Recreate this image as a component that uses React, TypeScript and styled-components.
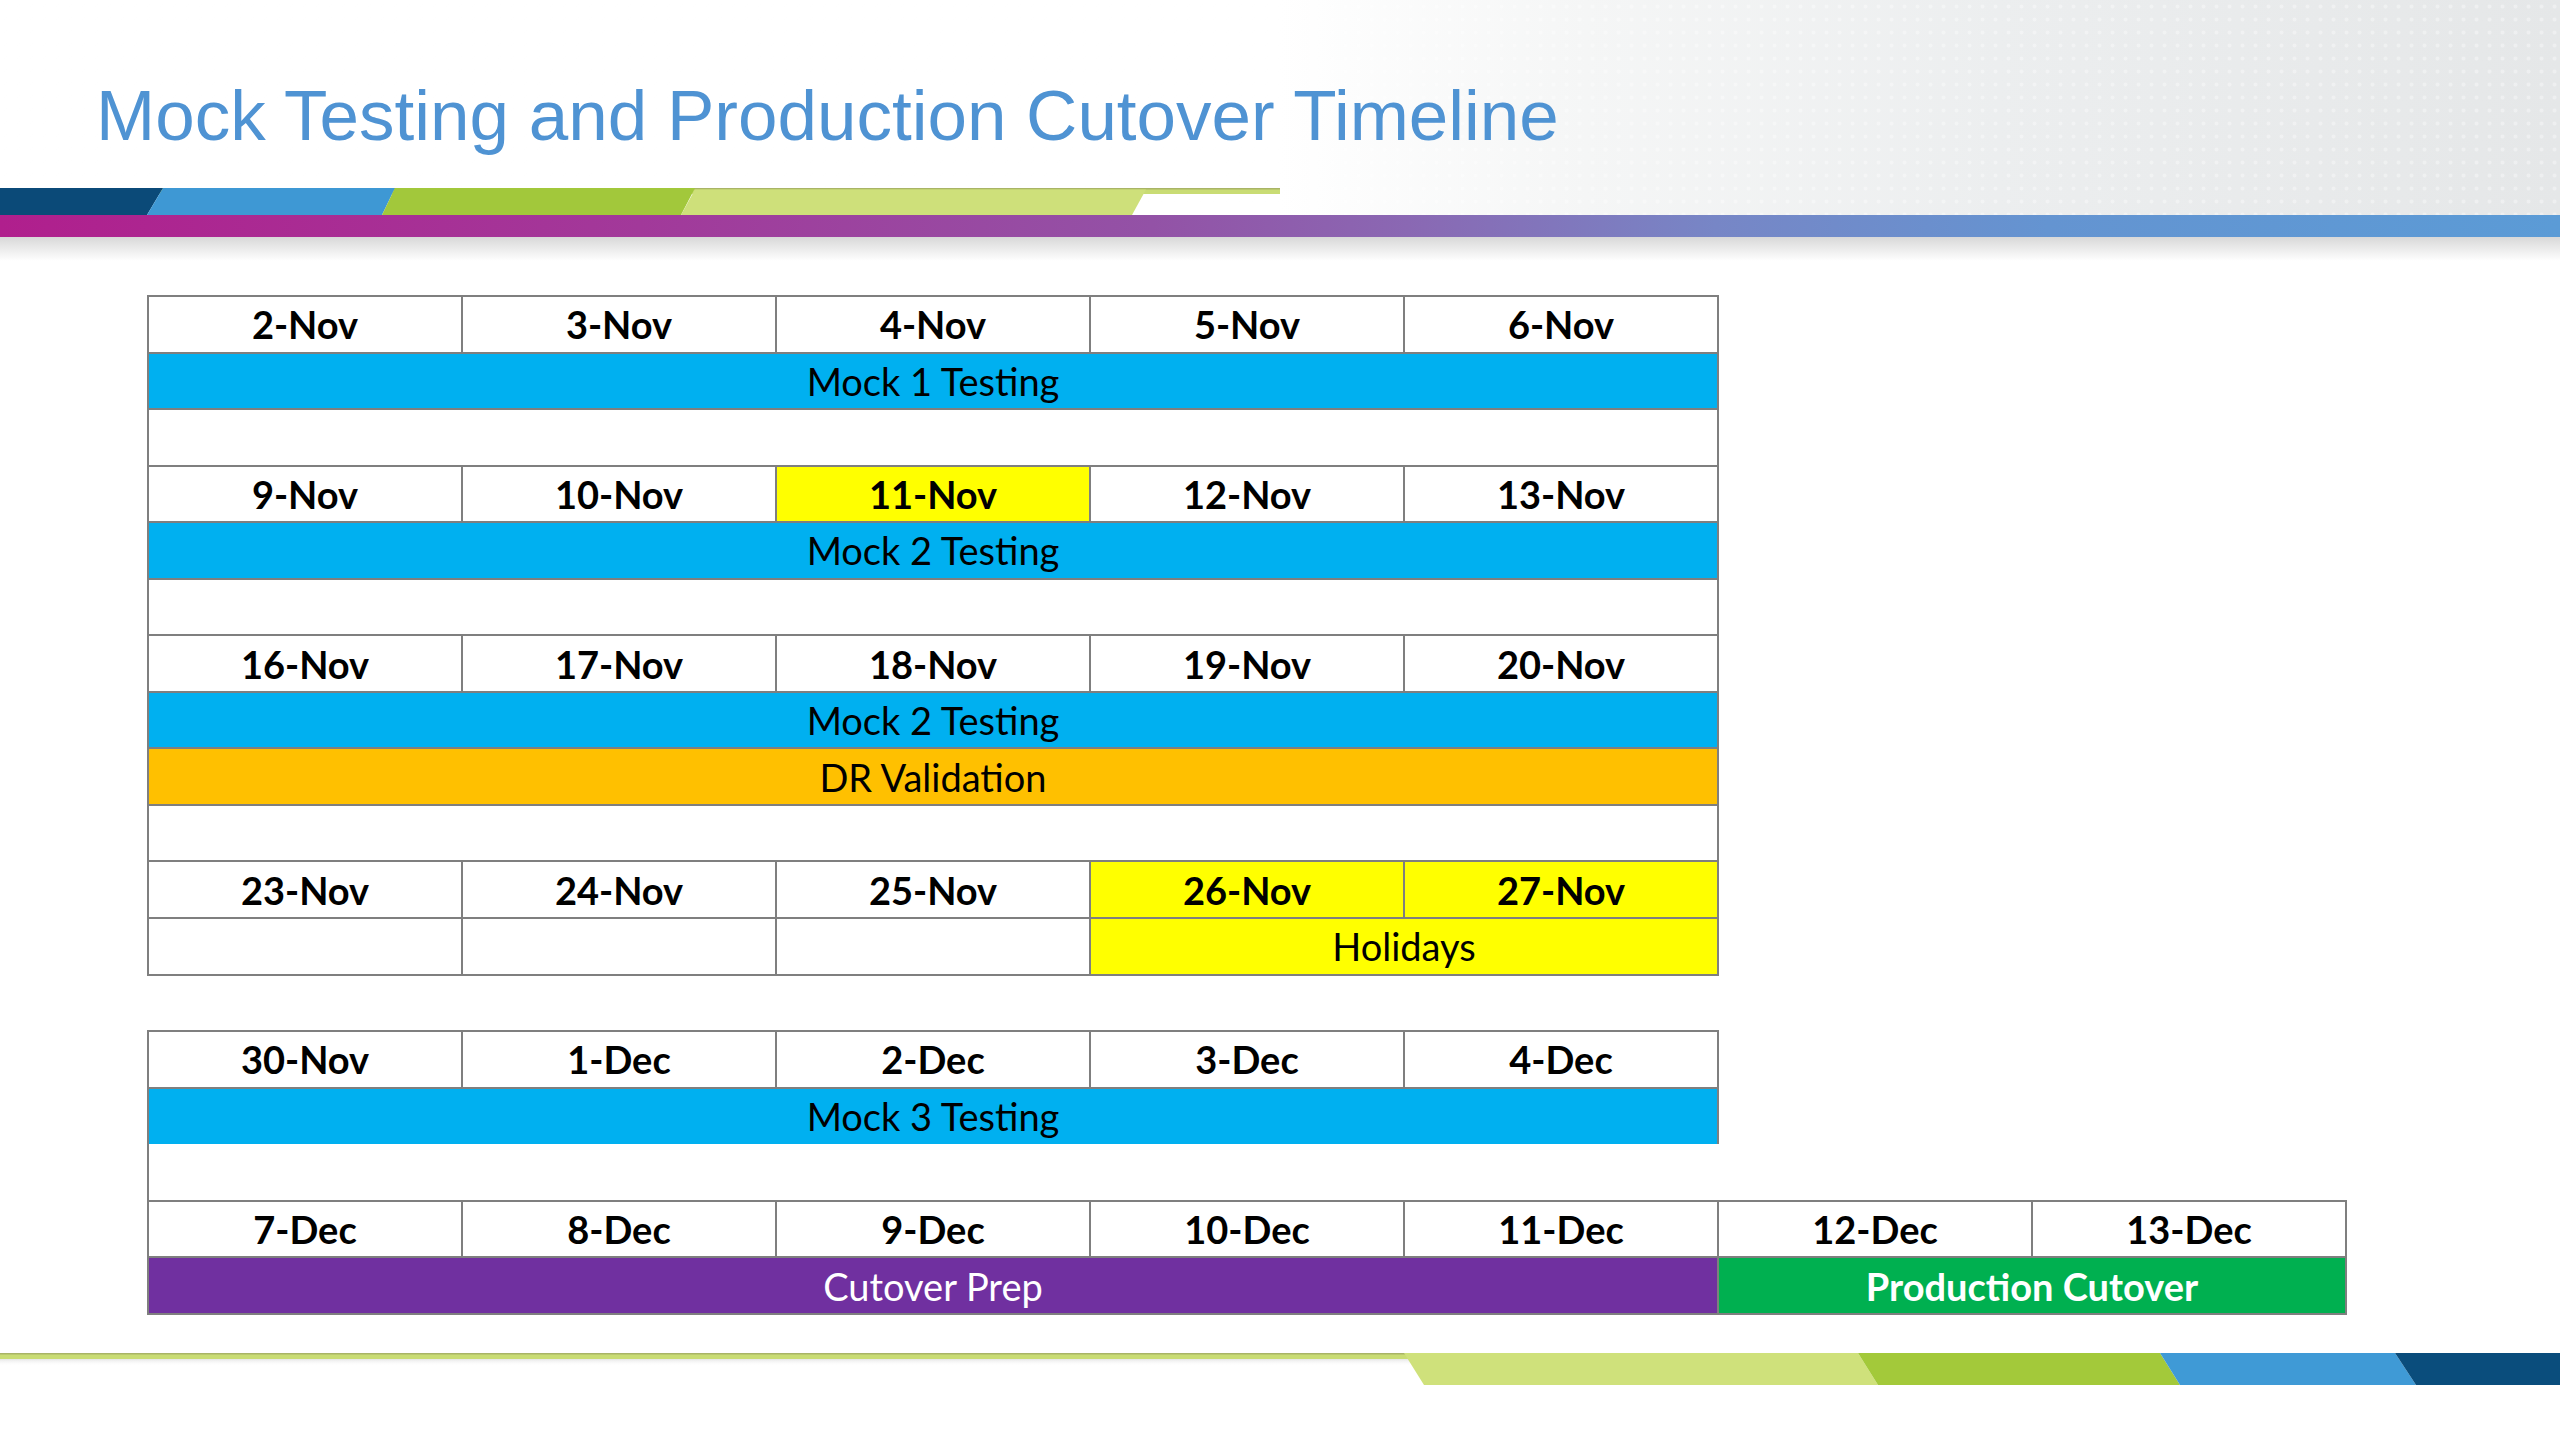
import React from 'react';
import styled, { createGlobalStyle, css } from 'styled-components';

const GlobalStyle = createGlobalStyle`
  html, body {
    margin: 0;
    padding: 0;
    background: #fff;
  }
  body {
    font-family: Lato, "Open Sans", sans-serif;
  }
`;

const Page = styled.div`
  width: 2560px;
  height: 1440px;
  display: flex;
  flex-direction: column;
  overflow: hidden;
  background: #fff;
`;

const HeaderArt = styled.div`
  background:
    radial-gradient(circle, rgba(255, 255, 255, 0.35) 1.6px, transparent 2.4px) 0 0 / 13px 13px,
    linear-gradient(90deg, #fff 0%, #fff 50%, #f5f6f6 62%, #eceeef 78%, #e5e7e8 100%);
`;

const Title = styled.h1`
  margin: 0;
  box-sizing: border-box;
  height: 188px;
  padding: 80px 0 0 96px;
  font-family: "Liberation Sans", Arial, sans-serif;
  font-weight: 400;
  font-size: 71px;
  line-height: 1;
  color: #4f93d3;
`;

const Stripe = styled.svg`
  display: block;
`;

const GradientBar = styled.div`
  height: 22px;
  background: linear-gradient(
    90deg,
    #b01f8d 0%,
    #a2399a 25%,
    #9352a6 45%,
    #8a68b3 55%,
    #7786c6 67%,
    #6494d1 80%,
    #5b9bd6 100%
  );
`;

const Shadow = styled.div`
  height: 24px;
  background: linear-gradient(#d8d8d8, rgba(255, 255, 255, 0));
`;

const Main = styled.main`
  padding: 34px 0 0 147px;
`;

const Table = styled.table`
  border-collapse: collapse;
  table-layout: fixed;
`;

const Column = styled.col`
  width: 314px;
`;

const Row = styled.tr`
  height: 56.56px;
`;

type Tone = 'white' | 'blue' | 'yellow' | 'orange' | 'purple' | 'green';
type Edge = 'full' | 'none' | 'left';

const tones: Record<Tone, { bg: string; fg: string }> = {
  white: { bg: '#ffffff', fg: '#000000' },
  blue: { bg: '#00b0f0', fg: '#000000' },
  yellow: { bg: '#ffff00', fg: '#000000' },
  orange: { bg: '#ffc000', fg: '#000000' },
  purple: { bg: '#7030a0', fg: '#ffffff' },
  green: { bg: '#00b050', fg: '#ffffff' },
};

const Cell = styled.td<{ $tone: Tone; $bold: boolean; $edge: Edge; $openBottom: boolean }>`
  padding: 0;
  text-align: center;
  vertical-align: middle;
  font-size: 38px;
  line-height: 1;
  font-weight: ${(p) => (p.$bold ? 700 : 400)};
  background: ${(p) => tones[p.$tone].bg};
  color: ${(p) => tones[p.$tone].fg};
  border: 2px solid #7f7f7f;
  ${(p) =>
    p.$edge === 'none' &&
    css`
      border: none;
      background: transparent;
    `}
  ${(p) =>
    p.$edge === 'left' &&
    css`
      border: none;
      border-left: 2px solid #7f7f7f;
      border-top: hidden;
    `}
  ${(p) =>
    p.$openBottom &&
    css`
      border-bottom-color: #1aa6db;
    `}
`;

const Footer = styled.footer`
  margin-top: auto;
  padding-bottom: 55px;
`;

type CellData = {
  text?: string;
  span?: number;
  tone?: Tone;
  bold?: boolean;
  edge?: Edge;
  openBottom?: boolean;
};

const dates = (list: string[], yellow: string[] = []): CellData[] =>
  list.map((d) => ({ text: d, bold: true, tone: yellow.includes(d) ? 'yellow' : 'white' }));

const bar = (text: string, tone: Tone, extra: Partial<CellData> = {}): CellData[] => [
  { text, span: 5, tone, ...extra },
];

const blank: CellData[] = [{ span: 5 }];

const rows: CellData[][] = [
  dates(['2-Nov', '3-Nov', '4-Nov', '5-Nov', '6-Nov']),
  bar('Mock 1 Testing', 'blue'),
  blank,
  dates(['9-Nov', '10-Nov', '11-Nov', '12-Nov', '13-Nov'], ['11-Nov']),
  bar('Mock 2 Testing', 'blue'),
  blank,
  dates(['16-Nov', '17-Nov', '18-Nov', '19-Nov', '20-Nov']),
  bar('Mock 2 Testing', 'blue'),
  bar('DR Validation', 'orange'),
  blank,
  dates(['23-Nov', '24-Nov', '25-Nov', '26-Nov', '27-Nov'], ['26-Nov', '27-Nov']),
  [{}, {}, {}, { text: 'Holidays', span: 2, tone: 'yellow' }],
  [{ span: 5, edge: 'none' }],
  dates(['30-Nov', '1-Dec', '2-Dec', '3-Dec', '4-Dec']),
  bar('Mock 3 Testing', 'blue', { openBottom: true }),
  [{ span: 5, edge: 'left' }],
  dates(['7-Dec', '8-Dec', '9-Dec', '10-Dec', '11-Dec', '12-Dec', '13-Dec']),
  [
    { text: 'Cutover Prep', span: 5, tone: 'purple' },
    { text: 'Production Cutover', span: 2, tone: 'green', bold: true },
  ],
];

function TopStripe() {
  return (
    <Stripe width="2560" height="27" viewBox="0 0 2560 27">
      <rect x="0" y="0" width="1280" height="6" fill="#c9dc74" />
      <rect x="0" y="0" width="1280" height="1.5" fill="#a9b466" />
      <polygon points="0,0 163,0 147,27 0,27" fill="#0b4a78" />
      <polygon points="163,0 395,0 382,27 147,27" fill="#3e98d4" />
      <polygon points="395,0 695,0 681,27 382,27" fill="#a2c83b" />
      <polygon points="695,1.5 1146,1.5 1132,27 681,27" fill="#cee07a" />
    </Stripe>
  );
}

function BottomStripe() {
  return (
    <Stripe width="2560" height="32" viewBox="0 0 2560 32">
      <defs>
        <linearGradient id="lineShade" x1="0" y1="0" x2="0" y2="1">
          <stop offset="0" stopColor="#e6e6e6" />
          <stop offset="1" stopColor="#ffffff" stopOpacity="0" />
        </linearGradient>
      </defs>
      <rect x="0" y="6" width="1410" height="7" fill="url(#lineShade)" />
      <rect x="0" y="0" width="1410" height="6" fill="#c9dc74" />
      <rect x="0" y="0" width="1410" height="1.5" fill="#a9b466" />
      <polygon points="1404,0 1858,0 1878,32 1424,32" fill="#cfe17b" />
      <polygon points="1858,0 2160,0 2180,32 1878,32" fill="#a3c93a" />
      <polygon points="2160,0 2395,0 2416,32 2180,32" fill="#3f9ad6" />
      <polygon points="2395,0 2560,0 2560,32 2416,32" fill="#0a4d7c" />
    </Stripe>
  );
}

export default function App() {
  return (
    <Page>
      <GlobalStyle />
      <header>
        <HeaderArt>
          <Title>Mock Testing and Production Cutover Timeline</Title>
          <TopStripe />
        </HeaderArt>
        <GradientBar />
        <Shadow />
      </header>
      <Main>
        <Table>
          <colgroup>
            {Array.from({ length: 7 }).map((_, i) => (
              <Column key={i} />
            ))}
          </colgroup>
          <tbody>
            {rows.map((cells, r) => (
              <Row key={r}>
                {cells.map((c, i) => (
                  <Cell
                    key={i}
                    colSpan={c.span ?? 1}
                    $tone={c.tone ?? 'white'}
                    $bold={!!c.bold}
                    $edge={c.edge ?? 'full'}
                    $openBottom={!!c.openBottom}
                  >
                    {c.text}
                  </Cell>
                ))}
              </Row>
            ))}
          </tbody>
        </Table>
      </Main>
      <Footer>
        <BottomStripe />
      </Footer>
    </Page>
  );
}
